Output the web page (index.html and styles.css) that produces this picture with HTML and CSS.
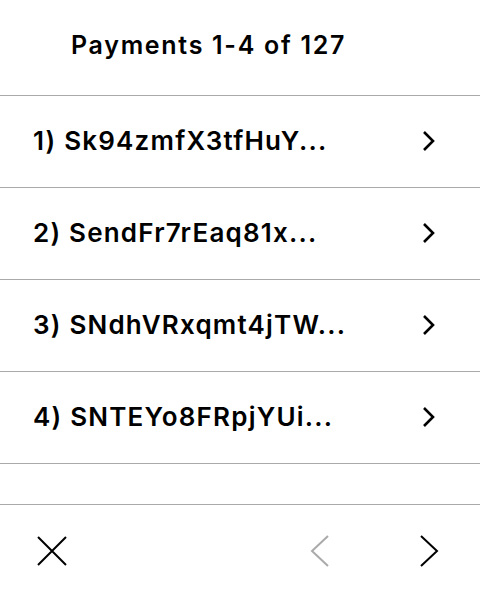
FILE: index.html
```html
<!DOCTYPE html>
<html>
<head>
<meta charset="utf-8">
<link rel="stylesheet" href="styles.css">
</head>
<body>
<div class="screen">
  <header class="header">
    <h1 class="title">Payments 1-4 of 127</h1>
  </header>
  <ul class="list">
    <li class="row"><span class="label">1) Sk94zmfX3tfHuY...</span><svg class="chev" width="14" height="22" viewBox="0 0 14 22"><path d="M2 2 L11 11 L2 20" fill="none" stroke="#000" stroke-width="2.6"/></svg></li>
    <li class="row"><span class="label">2) SendFr7rEaq81x...</span><svg class="chev" width="14" height="22" viewBox="0 0 14 22"><path d="M2 2 L11 11 L2 20" fill="none" stroke="#000" stroke-width="2.6"/></svg></li>
    <li class="row"><span class="label">3) SNdhVRxqmt4jTW...</span><svg class="chev" width="14" height="22" viewBox="0 0 14 22"><path d="M2 2 L11 11 L2 20" fill="none" stroke="#000" stroke-width="2.6"/></svg></li>
    <li class="row"><span class="label">4) SNTEYo8FRpjYUi...</span><svg class="chev" width="14" height="22" viewBox="0 0 14 22"><path d="M2 2 L11 11 L2 20" fill="none" stroke="#000" stroke-width="2.6"/></svg></li>
  </ul>
  <div class="spacer"></div>
  <footer class="footer">
    <svg class="icon-x" width="30" height="30" viewBox="0 0 30 30"><path d="M1 1 L29 29 M29 1 L1 29" fill="none" stroke="#000" stroke-width="2"/></svg>
    <div class="nav">
      <svg class="nav-btn" width="20" height="32" viewBox="0 0 20 32"><path d="M18 1 L2 16 L18 31" fill="none" stroke="#aaa" stroke-width="2"/></svg>
      <svg class="nav-btn" width="20" height="32" viewBox="0 0 20 32"><path d="M2 1 L18 16 L2 31" fill="none" stroke="#000" stroke-width="2"/></svg>
    </div>
  </footer>
</div>
</body>
</html>
```

FILE: styles.css
```css
html, body {
  margin: 0;
  padding: 0;
  background: #fff;
}
body {
  font-family: Inter, "Noto Sans", sans-serif;
  color: #000;
  width: 480px;
  height: 600px;
  overflow: hidden;
}
.screen {
  display: flex;
  flex-direction: column;
  height: 600px;
}
.header {
  height: 95px;
  border-bottom: 1px solid #aaa;
  display: flex;
  align-items: center;
  padding-left: 71px;
  box-sizing: content-box;
}
.title {
  margin: 0;
  font-size: 25px;
  font-weight: 600;
  letter-spacing: 1.7px;
  line-height: 1;
  margin-top: -4px;
  white-space: nowrap;
}
.list {
  list-style: none;
  margin: 0;
  padding: 0;
}
.row {
  height: 91px;
  border-bottom: 1px solid #aaa;
  display: flex;
  align-items: center;
  justify-content: space-between;
  padding: 0 44px 0 33px;
}
.label {
  font-size: 26px;
  font-weight: 600;
  letter-spacing: 1.2px;
  line-height: 1;
  margin-top: -2px;
  white-space: nowrap;
}
.chev {
  display: block;
  margin-top: -1px;
}
.spacer {
  height: 40px;
  border-bottom: 1px solid #aaa;
}
.footer {
  flex: 1;
  display: flex;
  align-items: center;
  justify-content: space-between;
  padding: 0 41px 0 37px;
}
.icon-x {
  display: block;
  margin-top: -4px;
}
.nav {
  display: flex;
  gap: 89px;
  margin-top: -4px;
}
.nav-btn {
  display: block;
}
```
